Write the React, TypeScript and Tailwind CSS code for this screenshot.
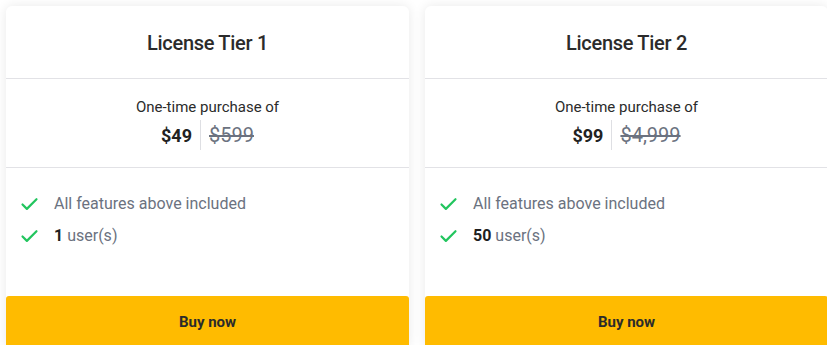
import { Check } from 'lucide-react';

interface Tier {
  name: string;
  price: string;
  oldPrice: string;
  users: string;
}

const tiers: Tier[] = [
  { name: 'License Tier 1', price: '$49', oldPrice: '$599', users: '1' },
  { name: 'License Tier 2', price: '$99', oldPrice: '$4,999', users: '50' },
];

function TierCard({ tier }: { tier: Tier }) {
  return (
    <div className="w-[403px] shrink-0 bg-white rounded-md shadow-[0_0_12px_rgba(0,0,0,0.09)] flex flex-col">
      <div className="h-[73px] shrink-0 flex items-center justify-center border-b border-[#e2e2e6]">
        <h2 className="text-[20px] font-medium tracking-[-0.3px] text-[#2b2b2b] pt-[2px]">{tier.name}</h2>
      </div>

      <div className="h-[89px] shrink-0 flex flex-col items-center justify-center border-b border-[#e2e2e6]">
        <p className="text-[15px] text-[#2b2b2b] leading-5 mt-[1px]">One-time purchase of</p>
        <div className="flex items-center mt-[3px]">
          <span className="text-[18px] font-bold text-[#222] pr-[8px]">{tier.price}</span>
          <span className="w-px h-[30px] bg-[#dedfe3]" />
          <span className="text-[20px] text-[#6b7280] line-through pl-[8px]">{tier.oldPrice}</span>
        </div>
      </div>

      <ul className="h-[128px] shrink-0 pt-[24px] px-[13px] flex flex-col gap-[8px]">
        <li className="flex items-center h-6">
          <Check size={21} strokeWidth={2.5} className="text-[#22c55e]" />
          <span className="ml-[14px] text-[16px] text-[#6b7280]">All features above included</span>
        </li>
        <li className="flex items-center h-6">
          <Check size={21} strokeWidth={2.5} className="text-[#22c55e]" />
          <span className="ml-[14px] text-[16px] text-[#6b7280]">
            <strong className="font-bold text-[#1f1f1f]">{tier.users}</strong> user(s)
          </span>
        </li>
      </ul>

      <button className="h-[52px] shrink-0 w-full bg-[#ffbb00] rounded-[3px] text-[15px] font-bold text-[#2b2b2b]">
        Buy now
      </button>
    </div>
  );
}

export default function App() {
  return (
    <div
      className="w-[827px] h-[345px] overflow-hidden bg-white flex items-start gap-4 pl-[6px] pt-[6px]"
      style={{ fontFamily: 'Roboto, "Liberation Sans", sans-serif' }}
    >
      {tiers.map((t) => (
        <TierCard key={t.name} tier={t} />
      ))}
    </div>
  );
}
